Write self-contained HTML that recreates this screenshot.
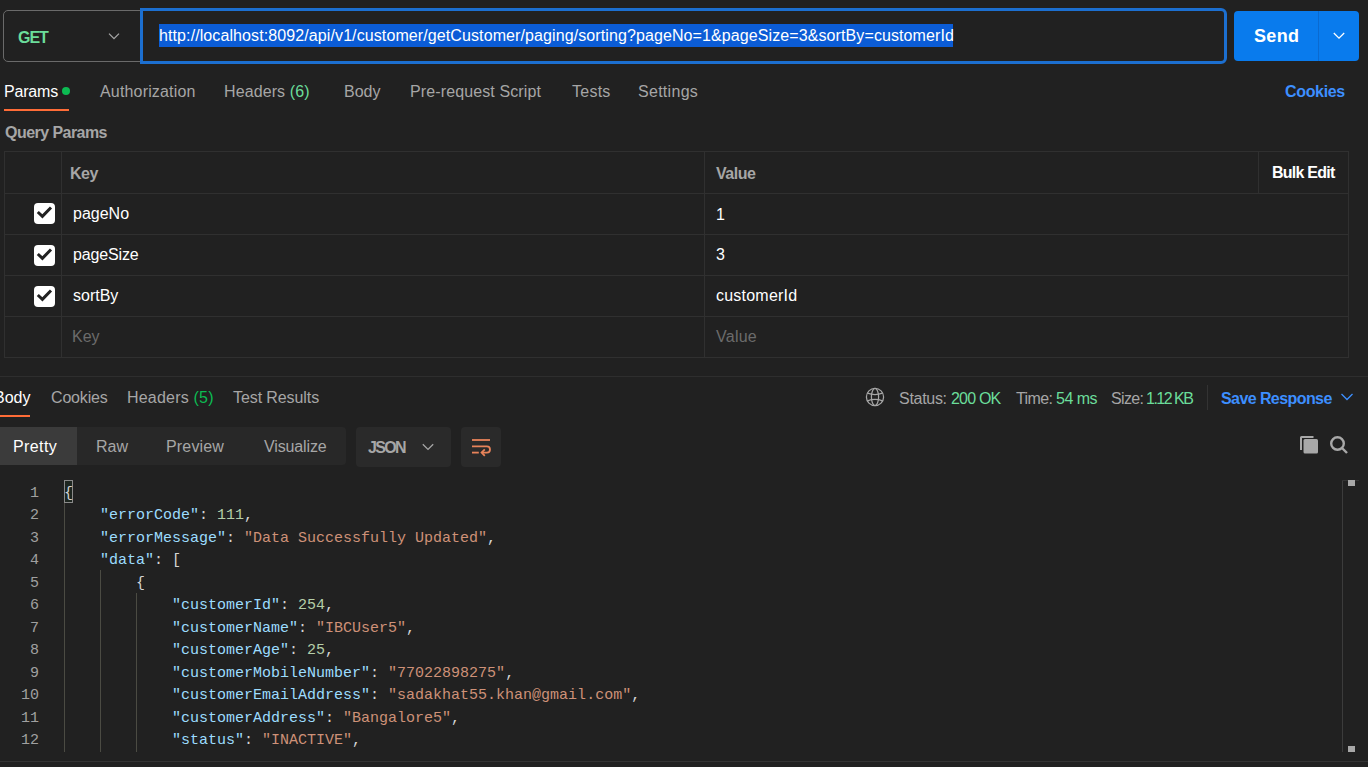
<!DOCTYPE html>
<html><head><meta charset="utf-8">
<style>
*{box-sizing:border-box;margin:0;padding:0}
html,body{width:1368px;height:767px;overflow:hidden;background:#212121}
body{position:relative;font-family:"Liberation Sans",sans-serif;color:#fff}
.a{position:absolute}
.t{position:absolute;white-space:pre;line-height:20px;font-size:15px}
.b{font-weight:700}
.g{color:#a6a6a6}
.w{color:#fff}
.ln{position:absolute;background:#303030}
.mono{font-family:"Liberation Mono",monospace}
</style></head><body>

<!-- ===== Request bar ===== -->
<div class="a" style="left:3px;top:10px;width:150px;height:52px;border:1px solid #6a6a6a;border-radius:5px"></div>
<svg class="a" style="left:107px;top:32px" width="14" height="9" viewBox="0 0 14 9"><path d="M2 1.6 L7 6.6 L12 1.6" fill="none" stroke="#a6a6a6" stroke-width="1.3"/></svg>
<div class="a" style="left:140px;top:8px;width:1087px;height:56px;border:3px solid #1c6fd0;border-radius:0 6px 6px 0;background:#212121"></div>
<div class="a" style="left:159px;top:24px;width:794px;height:23px;background:#0b5cd6"></div>
<div class="a" style="left:1234px;top:11px;width:125px;height:50px;background:#097bed;border-radius:4px"></div>
<div class="a" style="left:1318px;top:11px;width:1px;height:50px;background:#0a6ad0"></div>
<svg class="a" style="left:1332px;top:31px" width="14" height="10" viewBox="0 0 14 10"><path d="M1.8 2 L7 7.2 L12.2 2" fill="none" stroke="#fff" stroke-width="1.3"/></svg>

<!-- ===== Request tabs ===== -->
<div class="a" style="left:61.5px;top:87px;width:8px;height:8px;border-radius:50%;background:#0cbb52"></div>
<div class="a" style="left:4px;top:109px;width:65px;height:2px;background:#ff6c37"></div>


<!-- ===== Params table ===== -->
<div class="a" style="left:4px;top:151px;width:1345px;height:207px;border:1px solid #303030"></div>
<div class="ln" style="left:61px;top:151px;width:1px;height:207px"></div>
<div class="ln" style="left:704px;top:151px;width:1px;height:207px"></div>
<div class="ln" style="left:1258px;top:151px;width:1px;height:42px"></div>
<div class="ln" style="left:4px;top:193px;width:1345px;height:1px"></div>
<div class="ln" style="left:4px;top:234px;width:1345px;height:1px"></div>
<div class="ln" style="left:4px;top:275px;width:1345px;height:1px"></div>
<div class="ln" style="left:4px;top:316px;width:1345px;height:1px"></div>


<!-- rows -->
<div class="a" style="left:34px;top:203px;width:20.5px;height:21px;background:#fff;border-radius:4px"></div>
<svg class="a" style="left:34px;top:203px" width="20.5" height="21" viewBox="0 0 20.5 21"><path d="M3.8 9 L8.4 13.3 L17 4.5" fill="none" stroke="#212121" stroke-width="3"/></svg>
<div class="a" style="left:34px;top:245px;width:20.5px;height:21px;background:#fff;border-radius:4px"></div>
<svg class="a" style="left:34px;top:245px" width="20.5" height="21" viewBox="0 0 20.5 21"><path d="M3.8 9 L8.4 13.3 L17 4.5" fill="none" stroke="#212121" stroke-width="3"/></svg>
<div class="a" style="left:34px;top:286px;width:20.5px;height:21px;background:#fff;border-radius:4px"></div>
<svg class="a" style="left:34px;top:286px" width="20.5" height="21" viewBox="0 0 20.5 21"><path d="M3.8 9 L8.4 13.3 L17 4.5" fill="none" stroke="#212121" stroke-width="3"/></svg>

<!-- ===== Response ===== -->
<div class="ln" style="left:0;top:376px;width:1368px;height:1px;background:#2e2e2e"></div>
<div class="a" style="left:0;top:415px;width:30px;height:2px;background:#ff6c37"></div>

<svg class="a" style="left:865px;top:387px" width="20" height="20" viewBox="0 0 20 20" fill="none" stroke="#a6a6a6" stroke-width="1.25"><circle cx="10" cy="10" r="8.6"/><ellipse cx="10" cy="10" rx="3.6" ry="8.6"/><path d="M2.4 6.2 Q10 8.9 17.6 6.2"/><path d="M2.4 13.8 Q10 11.1 17.6 13.8"/></svg>
<div class="ln" style="left:1207px;top:385px;width:1px;height:25px;background:#333"></div>
<svg class="a" style="left:1340px;top:392px" width="14" height="10" viewBox="0 0 14 10"><path d="M1.5 2 L7 7.5 L12.5 2" fill="none" stroke="#3d8fff" stroke-width="1.3"/></svg>

<div class="a" style="left:0;top:427px;width:346px;height:38px;background:#282828;border-radius:0 4px 4px 0"></div>
<div class="a" style="left:0;top:427px;width:77px;height:38px;background:#3b3b3b"></div>

<div class="a" style="left:356px;top:427px;width:95px;height:40px;background:#2a2a2a;border-radius:4px"></div>
<svg class="a" style="left:421px;top:442px" width="14" height="10" viewBox="0 0 14 10"><path d="M1.8 2.2 L7 7.4 L12.2 2.2" fill="none" stroke="#a6a6a6" stroke-width="1.3"/></svg>

<div class="a" style="left:461px;top:427px;width:40px;height:40px;background:#2a2a2a;border-radius:4px"></div>
<svg class="a" style="left:461px;top:427px" width="40" height="40" viewBox="0 0 40 40" fill="none" stroke="#e8835a" stroke-width="1.8"><path d="M11 13 H29"/><path d="M11 19.4 H25.9 A3.1 3.1 0 0 1 25.9 25.6 H20.8"/><path d="M11 25.6 H17.8"/><path d="M23.8 22.4 L20.6 25.6 L23.8 28.8"/></svg>

<svg class="a" style="left:1298px;top:434px" width="22" height="22" viewBox="0 0 22 22" fill="#a8a8a8"><path d="M2 16 V3.5 A1.5 1.5 0 0 1 3.5 2 H15.5 V4 H4 V16 Z"/><rect x="5.5" y="5" width="14.5" height="14.5" rx="1.5"/></svg>
<svg class="a" style="left:1327px;top:433px" width="24" height="24" viewBox="0 0 24 24" fill="none" stroke="#a8a8a8" stroke-width="2.4"><circle cx="10.5" cy="10.5" r="6.3"/><path d="M15 15 L20 20"/></svg>

<!-- ===== Code ===== -->
<style>
.code{position:absolute;left:0;top:482.6px;font-family:"Liberation Mono",monospace;font-size:15px;line-height:22.5px;white-space:pre}
.gut{position:absolute;left:0;top:482.6px;width:39px;text-align:right;font-family:"Liberation Mono",monospace;font-size:15px;line-height:22.5px;color:#a0a0a0;white-space:pre}
.k{color:#9cdcfe}.n{color:#b5cea8}.s{color:#ce9178}.p{color:#d4d4d4}
</style>
<div class="gut">1
2
3
4
5
6
7
8
9
10
11
12</div>
<div class="a" style="left:64px;top:480px;width:9px;height:23px;border:1px solid #8a8a8a;background:#1e2620"></div>
<div class="ln" style="left:64px;top:503px;width:1px;height:249px;background:#4b4b43"></div>
<div class="ln" style="left:100px;top:570px;width:1px;height:182px;background:#4b4b43"></div>
<div class="ln" style="left:136px;top:593px;width:1px;height:159px;background:#4b4b43"></div>
<div class="code p" style="left:64px"><span class="p">{</span>
    <span class="k">"errorCode"</span>: <span class="n">111</span>,
    <span class="k">"errorMessage"</span>: <span class="s">"Data Successfully Updated"</span>,
    <span class="k">"data"</span>: [
        {
            <span class="k">"customerId"</span>: <span class="n">254</span>,
            <span class="k">"customerName"</span>: <span class="s">"IBCUser5"</span>,
            <span class="k">"customerAge"</span>: <span class="n">25</span>,
            <span class="k">"customerMobileNumber"</span>: <span class="s">"77022898275"</span>,
            <span class="k">"customerEmailAddress"</span>: <span class="s">"sadakhat55.khan@gmail.com"</span>,
            <span class="k">"customerAddress"</span>: <span class="s">"Bangalore5"</span>,
            <span class="k">"status"</span>: <span class="s">"INACTIVE"</span>,</div>

<!-- scrollbar -->
<div class="ln" style="left:1342px;top:480px;width:1px;height:272px;background:#3c3c3c"></div>
<div class="ln" style="left:1342px;top:480px;width:17px;height:1px;background:#333"></div>
<div class="a" style="left:1348px;top:480px;width:7px;height:6px;background:#a8a8a8"></div>
<div class="a" style="left:1348px;top:746px;width:7px;height:6px;background:#a8a8a8"></div>
<div class="ln" style="left:0;top:761px;width:1368px;height:1px;background:#333"></div>
<div class="t" id="GET" style="left:18.00px;top:28.00px;font-size:16px;font-weight:700;color:#6bdd9a;letter-spacing:-1.000px">GET</div>
<div class="t" id="URL" style="left:159.00px;top:26.00px;font-size:16px;font-weight:400;color:#ffffff;letter-spacing:0.099px">http://localhost:8092/api/v1/customer/getCustomer/paging/sorting?pageNo=1&amp;pageSize=3&amp;sortBy=customerId</div>
<div class="t" id="Send" style="left:1254.00px;top:26.00px;font-size:18px;font-weight:700;color:#ffffff;letter-spacing:0.333px">Send</div>
<div class="t" id="Params" style="left:4.00px;top:82.00px;font-size:16px;font-weight:400;color:#ffffff;letter-spacing:-0.200px">Params</div>
<div class="t" id="Auth" style="left:100.00px;top:82.00px;font-size:16px;font-weight:400;color:#a6a6a6;letter-spacing:0.167px">Authorization</div>
<div class="t" id="Hdr6" style="left:224.00px;top:82.00px;font-size:16px;font-weight:400;color:#a6a6a6;letter-spacing:0.100px">Headers <span style='color:#6bdd9a'>(6)</span></div>
<div class="t" id="BodyT" style="left:344.00px;top:82.00px;font-size:16px;font-weight:400;color:#a6a6a6;letter-spacing:0.000px">Body</div>
<div class="t" id="PreReq" style="left:410.00px;top:82.00px;font-size:16px;font-weight:400;color:#a6a6a6;letter-spacing:0.118px">Pre-request Script</div>
<div class="t" id="Tests" style="left:572.00px;top:82.00px;font-size:16px;font-weight:400;color:#a6a6a6;letter-spacing:0.250px">Tests</div>
<div class="t" id="Settings" style="left:638.00px;top:82.00px;font-size:16px;font-weight:400;color:#a6a6a6;letter-spacing:0.286px">Settings</div>
<div class="t" id="CookiesT" style="left:1285.00px;top:82.00px;font-size:16px;font-weight:700;color:#3d8fff;letter-spacing:-0.333px">Cookies</div>
<div class="t" id="QP" style="left:5.00px;top:123.00px;font-size:16px;font-weight:700;color:#a6a6a6;letter-spacing:-0.545px">Query Params</div>
<div class="t" id="KeyH" style="left:70.00px;top:164.00px;font-size:16px;font-weight:700;color:#a6a6a6;letter-spacing:-0.500px">Key</div>
<div class="t" id="ValueH" style="left:716.00px;top:164.00px;font-size:16px;font-weight:700;color:#a6a6a6;letter-spacing:-0.500px">Value</div>
<div class="t" id="Bulk" style="left:1272.00px;top:163.00px;font-size:16px;font-weight:700;color:#ffffff;letter-spacing:-0.750px">Bulk Edit</div>
<div class="t" id="pageNo" style="left:73.00px;top:204.00px;font-size:16px;font-weight:400;color:#ffffff;letter-spacing:0.000px">pageNo</div>
<div class="t" id="pageSize" style="left:73.00px;top:245.00px;font-size:16px;font-weight:400;color:#ffffff;letter-spacing:-0.143px">pageSize</div>
<div class="t" id="sortBy" style="left:73.00px;top:286.00px;font-size:16px;font-weight:400;color:#ffffff;letter-spacing:0.000px">sortBy</div>
<div class="t" id="KeyPh" style="left:72.00px;top:327.00px;font-size:16px;font-weight:400;color:#6b6b6b;letter-spacing:0.000px">Key</div>
<div class="t" id="v1" style="left:716.00px;top:205.00px;font-size:16px;font-weight:400;color:#ffffff;letter-spacing:0.000px">1</div>
<div class="t" id="v3" style="left:716.00px;top:245.00px;font-size:16px;font-weight:400;color:#ffffff;letter-spacing:0.000px">3</div>
<div class="t" id="custId" style="left:716.00px;top:286.00px;font-size:16px;font-weight:400;color:#ffffff;letter-spacing:0.222px">customerId</div>
<div class="t" id="ValPh" style="left:716.00px;top:327.00px;font-size:16px;font-weight:400;color:#6b6b6b;letter-spacing:0.250px">Value</div>
<div class="t" id="BodyR" style="left:-6.00px;top:388.00px;font-size:16px;font-weight:400;color:#ffffff;letter-spacing:0.000px">Body</div>
<div class="t" id="CookiesR" style="left:51.00px;top:388.00px;font-size:16px;font-weight:400;color:#a6a6a6;letter-spacing:-0.167px">Cookies</div>
<div class="t" id="Hdr5" style="left:127.00px;top:388.00px;font-size:16px;font-weight:400;color:#a6a6a6;letter-spacing:0.200px">Headers <span style='color:#0cbb52'>(5)</span></div>
<div class="t" id="TestRes" style="left:233.00px;top:388.00px;font-size:16px;font-weight:400;color:#a6a6a6;letter-spacing:-0.091px">Test Results</div>
<div class="t" id="Status" style="left:899.00px;top:389.00px;font-size:16px;font-weight:400;color:#a6a6a6;letter-spacing:-0.295px">Status:</div>
<div class="t" id="StatusV" style="left:951.00px;top:389.00px;font-size:16px;font-weight:400;color:#6bdd9a;letter-spacing:-0.800px">200 OK</div>
<div class="t" id="Time" style="left:1016.00px;top:389.00px;font-size:16px;font-weight:400;color:#a6a6a6;letter-spacing:-0.600px">Time:</div>
<div class="t" id="TimeV" style="left:1056.00px;top:389.00px;font-size:16px;font-weight:400;color:#6bdd9a;letter-spacing:-0.500px">54 ms</div>
<div class="t" id="Size" style="left:1111.00px;top:389.00px;font-size:16px;font-weight:400;color:#a6a6a6;letter-spacing:-0.667px">Size:</div>
<div class="t" id="SizeV" style="left:1146.00px;top:389.00px;font-size:16px;font-weight:400;color:#6bdd9a;letter-spacing:-1.500px">1.12 KB</div>
<div class="t" id="SaveR" style="left:1221.00px;top:389.00px;font-size:16px;font-weight:700;color:#3d8fff;letter-spacing:-0.583px">Save Response</div>
<div class="t" id="Pretty" style="left:13.00px;top:437.00px;font-size:16px;font-weight:400;color:#ffffff;letter-spacing:0.400px">Pretty</div>
<div class="t" id="Raw" style="left:96.00px;top:437.00px;font-size:16px;font-weight:400;color:#a6a6a6;letter-spacing:0.000px">Raw</div>
<div class="t" id="Preview" style="left:166.00px;top:437.00px;font-size:16px;font-weight:400;color:#a6a6a6;letter-spacing:0.167px">Preview</div>
<div class="t" id="Visualize" style="left:264.00px;top:437.00px;font-size:16px;font-weight:400;color:#a6a6a6;letter-spacing:-0.125px">Visualize</div>
<div class="t" id="JSON" style="left:368.00px;top:438.00px;font-size:16px;font-weight:700;color:#a6a6a6;letter-spacing:-1.667px">JSON</div>
</body></html>
